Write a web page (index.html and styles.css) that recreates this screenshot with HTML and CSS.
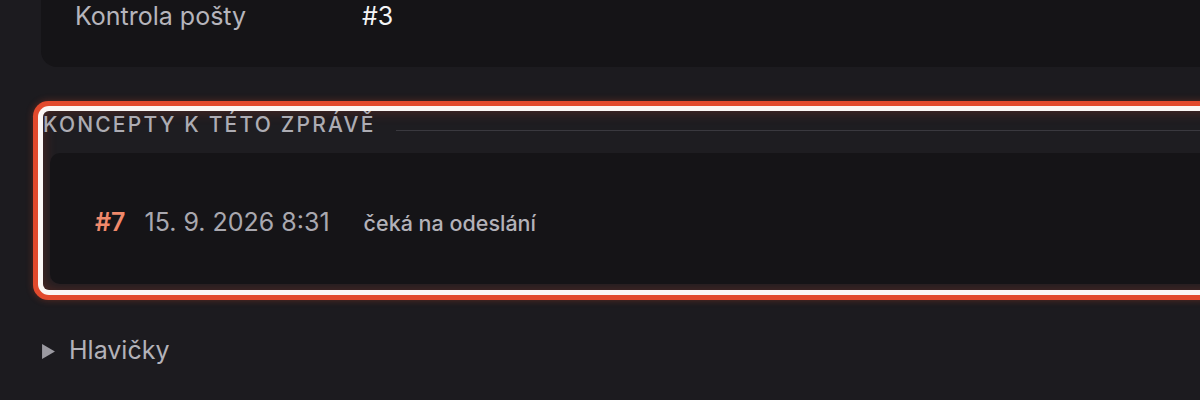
FILE: index.html
```html
<!DOCTYPE html>
<html lang="cs">
<head>
<meta charset="utf-8">
<title>Koncepty</title>
<link rel="stylesheet" href="styles.css">
</head>
<body>
<div class="page">
  <div class="info-card">
    <div class="info-row">
      <span class="info-label">Kontrola pošty</span>
      <span class="info-value">#3</span>
    </div>
  </div>

  <section class="drafts">
    <div class="drafts-head">
      <h2 class="drafts-title">Koncepty k této zprávě</h2>
      <span class="drafts-rule"></span>
    </div>
    <div class="drafts-card">
      <div class="draft-row">
        <span class="draft-id">#7</span>
        <span class="draft-date">15. 9. 2026 8:31</span>
        <span class="draft-status">čeká na odeslání</span>
      </div>
    </div>
  </section>

  <div class="headers">
    <svg class="headers-caret" viewBox="0 0 12 14" width="12" height="14" aria-hidden="true"><path d="M0 0 L12 7 L0 14 Z" fill="#9b9aa1"/></svg>
    <span class="headers-label">Hlavičky</span>
  </div>
</div>
</body>
</html>
```

FILE: styles.css
```css
html, body {
  margin: 0;
  padding: 0;
  background: #1c1b1f;
  overflow: hidden;
}

body {
  font-family: Inter, "Noto Sans", sans-serif;
  width: 1200px;
  height: 400px;
}

.page {
  width: 1320px;
  padding-left: 41px;
}

.info-card {
  background: #151417;
  border-radius: 0 0 16px 16px;
  padding: 1px 0 36px 34px;
}

.info-row {
  display: flex;
  font-size: 25px;
  line-height: 30px;
}

.info-label {
  color: #b6b5bc;
  width: 287px;
}

.info-value {
  color: #f4f4f6;
}

.drafts {
  margin: 44px 0 0 2px;
  height: 179px;
  box-sizing: border-box;
  background: #1e1d21;
  border-radius: 6px;
  box-shadow:
    inset 0 0 14px rgba(225, 74, 46, 0.28),
    0 0 0 5px #fbf7f5,
    0 0 0 10px #e24a2d,
    0 0 6px 11px rgba(226, 74, 45, 0.25);
  padding-top: 1px;
  overflow: hidden;
}

.drafts-head {
  display: flex;
  align-items: flex-end;
}

.drafts-title {
  margin: 0;
  font-size: 21px;
  font-weight: 500;
  line-height: 25px;
  letter-spacing: 2.2px;
  text-transform: uppercase;
  color: #adacb3;
  white-space: nowrap;
}

.drafts-rule {
  flex: 1;
  height: 1px;
  background: #3a393f;
  margin: 0 0 6px 20px;
}

.drafts-card {
  margin: 16px 0 0 7px;
  height: 131px;
  box-sizing: border-box;
  background: #151417;
  border-radius: 10px;
  padding: 54px 0 0 45px;
}

.draft-row {
  display: flex;
  align-items: baseline;
  line-height: 30px;
}

.draft-id {
  font-size: 25px;
  font-weight: 600;
  color: #f0896b;
  margin-right: 19px;
}

.draft-date {
  font-size: 25px;
  color: #a9a8af;
  margin-right: 34px;
}

.draft-status {
  font-size: 21.5px;
  font-weight: 500;
  color: #b3b2b9;
}

.headers {
  display: flex;
  align-items: center;
  margin-top: 45px;
  line-height: 30px;
}

.headers-caret {
  width: 13px;
  height: 15px;
  margin: 2px 14px 0 1px;
  flex: none;
}

.headers-label {
  font-size: 25px;
  color: #b3b2b9;
}
```
